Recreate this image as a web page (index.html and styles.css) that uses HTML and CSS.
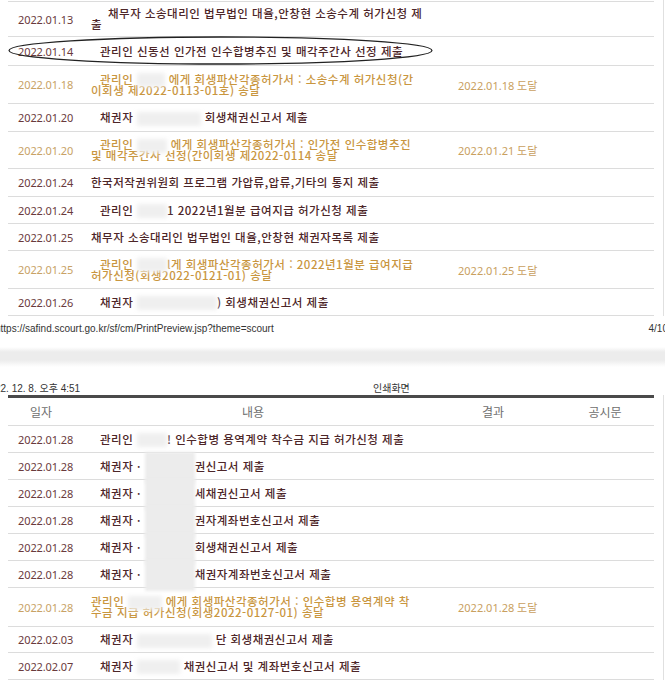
FILE: index.html
```html
<!DOCTYPE html>
<html lang="ko">
<head>
<meta charset="utf-8">
<title>인쇄화면</title>
<link rel="stylesheet" href="styles.css">
</head>
<body>
<div class="sheet sheet-top">
  <div class="list">
    <div class="row h35"><div class="date">2022.01.13</div><div class="txt ind2">채무자 소송대리인 법무법인 대율,안창현 소송수계 허가신청 제<br>출</div><div class="res"></div><div class="ann"></div></div>
    <div class="row h29"><div class="date">2022.01.14</div><div class="txt ind">관리인 신동선 인가전 인수합병추진 및 매각주간사 선정 제출</div><div class="res"></div><div class="ann"></div></div>
    <div class="row h38 sent"><div class="date">2022.01.18</div><div class="txt ind">관리인 <span class="blur w28"></span> 에게 회생파산각종허가서 : 소송수계 허가신청(간<br>이회생 제2022-0113-01호) 송달</div><div class="res">2022.01.18 도달</div><div class="ann"></div></div>
    <div class="row h28"><div class="date">2022.01.20</div><div class="txt ind">채권자 <span class="blur w64"></span> 회생채권신고서 제출</div><div class="res"></div><div class="ann"></div></div>
    <div class="row h37 sent"><div class="date">2022.01.20</div><div class="txt ind">관리인 <span class="blur w30"></span> 에게 회생파산각종허가서 : 인가전 인수합병추진<br>및 매각주간사 선정(간이회생 제2022-0114 송달</div><div class="res">2022.01.21 도달</div><div class="ann"></div></div>
    <div class="row h28"><div class="date">2022.01.24</div><div class="txt">한국저작권위원회 프로그램 가압류,압류,기타의 통지 제출</div><div class="res"></div><div class="ann"></div></div>
    <div class="row"><div class="date">2022.01.24</div><div class="txt ind">관리인 <span class="blur w30"></span>1 2022년1월분 급여지급 허가신청 제출</div><div class="res"></div><div class="ann"></div></div>
    <div class="row"><div class="date">2022.01.25</div><div class="txt">채무자 소송대리인 법무법인 대율,안창현 채권자목록 제출</div><div class="res"></div><div class="ann"></div></div>
    <div class="row h38 sent"><div class="date">2022.01.25</div><div class="txt ind">관리인 <span class="blur w30"></span>l게 회생파산각종허가서 : 2022년1월분 급여지급<br>허가신청(회생2022-0121-01) 송달</div><div class="res">2022.01.25 도달</div><div class="ann"></div></div>
    <div class="row"><div class="date">2022.01.26</div><div class="txt ind">채권자 <span class="blur w80"></span>) 회생채권신고서 제출</div><div class="res"></div><div class="ann"></div></div>
  </div>
</div>
<div class="print-foot">
  <span class="url">https://safind.scourt.go.kr/sf/cm/PrintPreview.jsp?theme=scourt</span>
  <span class="pageno">4/10</span>
</div>
<div class="sep"></div>
<div class="print-head">
  <span class="stamp">22. 12. 8. 오후 4:51</span>
  <span class="title">인쇄화면</span>
</div>
<div class="sheet sheet-bottom">
  <div class="list list-head">
    <div class="row head"><div class="hd hd-date">일자</div><div class="hd">내용</div><div class="hd">결과</div><div class="hd hd-ann">공시문</div></div>
    <div class="row"><div class="date">2022.01.28</div><div class="txt ind">관리인 <span class="blur w30"></span>! 인수합병 용역계약 착수금 지급 허가신청 제출</div><div class="res"></div><div class="ann"></div></div>
    <div class="row"><div class="date">2022.01.28</div><div class="txt ind">채권자 · <span class="blur tall w50"></span>권신고서 제출</div><div class="res"></div><div class="ann"></div></div>
    <div class="row"><div class="date">2022.01.28</div><div class="txt ind">채권자 · <span class="blur tall w50"></span>세채권신고서 제출</div><div class="res"></div><div class="ann"></div></div>
    <div class="row"><div class="date">2022.01.28</div><div class="txt ind">채권자 · <span class="blur tall w50"></span>권자계좌번호신고서 제출</div><div class="res"></div><div class="ann"></div></div>
    <div class="row"><div class="date">2022.01.28</div><div class="txt ind">채권자 · <span class="blur tall w50"></span>회생채권신고서 제출</div><div class="res"></div><div class="ann"></div></div>
    <div class="row"><div class="date">2022.01.28</div><div class="txt ind">채권자 · <span class="blur tall w50"></span>채권자계좌번호신고서 제출</div><div class="res"></div><div class="ann"></div></div>
    <div class="row h39 sent"><div class="date">2022.01.28</div><div class="txt">관리인 <span class="blur w34"></span> 에게 회생파산각종허가서 : 인수합병 용역계약 착<br>수금 지급 허가신청(회생2022-0127-01) 송달</div><div class="res">2022.01.28 도달</div><div class="ann"></div></div>
    <div class="row h26"><div class="date">2022.02.03</div><div class="txt ind">채권자 <span class="blur w75"></span> 단 회생채권신고서 제출</div><div class="res"></div><div class="ann"></div></div>
    <div class="row"><div class="date">2022.02.07</div><div class="txt ind">채권자 <span class="blur w43"></span> 채권신고서 및 계좌번호신고서 제출</div><div class="res"></div><div class="ann"></div></div>
  </div>
</div>
<svg class="oval" width="440" height="40" viewBox="0 0 440 40" aria-hidden="true">
  <ellipse cx="220.5" cy="20.5" rx="211.5" ry="13.5" fill="none" stroke="#222" stroke-width="1.3"/>
</svg>
</body>
</html>
```

FILE: styles.css
```css
* { box-sizing: border-box; }
html, body { margin: 0; padding: 0; }
body {
  width: 665px;
  height: 682px;
  overflow: hidden;
  position: relative;
  background: #fff;
  font-family: "Noto Sans", "Noto Sans CJK KR", sans-serif;
  color: #4d2628;
}

.sheet {
  width: 664px;
  padding: 0 9px 0 8px;
  border-right: 1px solid #e0e0e0;
}
.sheet-top { padding-top: 1px; }

.list { border-top: 1px solid #dcdcdc; }
.list-head { border-top: 3px solid #4a4a4a; }

.row {
  display: grid;
  grid-template-columns: 80px 330px 150px 86px;
  align-items: center;
  height: 27px;
  border-bottom: 1px solid #dcdcdc;
}
.h26 { height: 26px; }
.h28 { height: 28px; }
.h29 { height: 29px; }
.h35 { height: 35px; }
.h37 { height: 37px; }
.h38 { height: 38px; }
.h39 { height: 39px; }

.date {
  padding-left: 10px;
  font-size: 11px;
  color: #6a3a3c;
  letter-spacing: -0.1px;
}
.txt {
  padding-left: 3px;
  font-family: "Noto Sans CJK KR", sans-serif;
  font-size: 11.5px;
  font-weight: 500;
  letter-spacing: 0.5px;
  line-height: 11px;
  white-space: nowrap;
  color: #4d2628;
}
.txt.ind { text-indent: 9px; }
.txt.ind2 { text-indent: 17px; }
.res {
  padding-left: 40px;
  font-size: 11px;
  color: #c9a060;
  white-space: nowrap;
}

.sent .date { color: #c8a266; }
.sent .txt { color: #c9963f; }

.blur {
  display: inline-block;
  height: 14px;
  vertical-align: middle;
  margin: -4px 0;
  background: #efefef;
  filter: blur(2px);
  text-indent: 0;
}
.blur.tall { height: 31px; margin: -12px 0; background: #ececec; filter: blur(1.5px); }
.w28 { width: 28px; }
.w30 { width: 30px; }
.w34 { width: 34px; }
.w43 { width: 43px; }
.w50 { width: 50px; }
.w64 { width: 64px; }
.w75 { width: 75px; }
.w80 { width: 80px; }

.head { height: 28px; }
.hd {
  text-align: center;
  font-family: "Noto Sans CJK KR", sans-serif;
  font-size: 12px;
  color: #6e6e6e;
}
.hd-date { padding-right: 14px; }
.hd-ann { padding-right: 12px; }

.print-foot {
  height: 24px;
  display: flex;
  align-items: center;
  justify-content: space-between;
  font-family: "Liberation Sans", Arial, sans-serif;
  font-size: 10px;
  color: #333;
}
.url { margin-left: -5px; }
.pageno { margin-right: -3px; }

.sep {
  height: 40px;
  background: linear-gradient(to bottom, #fff 0, #fff 7px, #ececec 12px, #ececec 20px, #fff 27px, #fff 100%);
}

.print-head {
  height: 15px;
  display: grid;
  grid-template-columns: 373px auto;
  align-items: center;
  font-family: "Liberation Sans", "Noto Sans CJK KR", sans-serif;
  font-size: 10px;
  color: #333;
}
.stamp { margin-left: -5px; }

.oval {
  position: absolute;
  left: 0;
  top: 30px;
}
```
